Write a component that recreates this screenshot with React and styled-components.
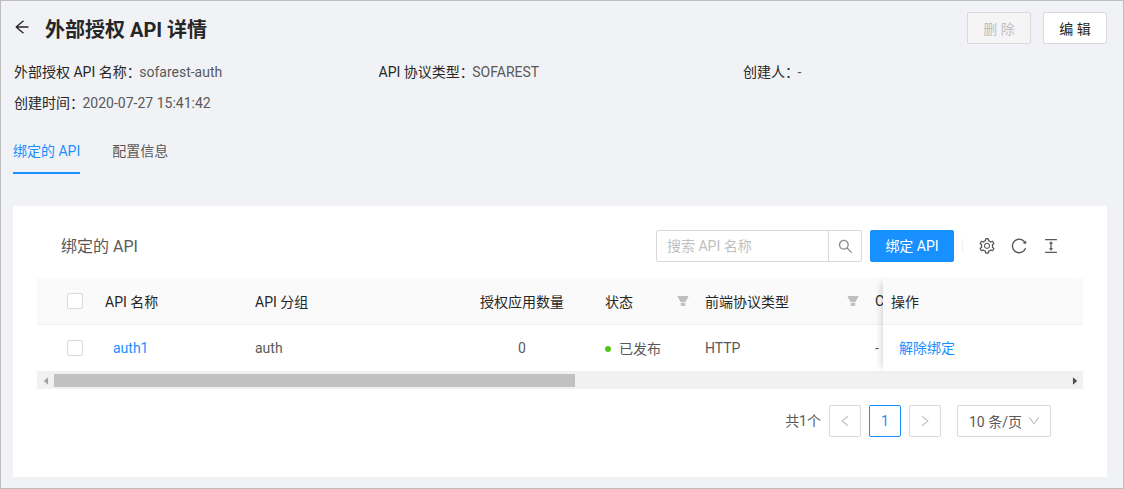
import React from "react";
import styled, { createGlobalStyle } from "styled-components";
import {
	AiOutlineArrowLeft,
	AiOutlineSetting,
	AiOutlineReload,
	AiOutlineColumnHeight,
	AiOutlineSearch,
	AiFillFilter,
	AiOutlineLeft,
	AiOutlineRight,
	AiOutlineDown,
	AiFillCaretLeft,
	AiFillCaretRight,
} from "react-icons/ai";

const GlobalStyle = createGlobalStyle`
	html, body {
		margin: 0;
		padding: 0;
		background: #f0f2f5;
	}
	* {
		box-sizing: border-box;
	}
	body {
		font-family: Roboto, "Noto Sans CJK SC", sans-serif;
		font-size: 14px;
		color: #595959;
	}
`;

const Page = styled.div`
	width: 1124px;
	height: 489px;
	overflow: hidden;
	background: #f0f2f5;
	border: 1px solid #bdbdbd;
	padding: 11px 16px 11px 12px;
`;

const Header = styled.header`
	display: flex;
	align-items: center;
	height: 32px;
`;

const Back = styled.span`
	display: flex;
	width: 32px;
	margin-bottom: 2px;
	font-size: 18px;
	color: #262626;
`;

const Title = styled.h1`
	margin: 0;
	flex: 1;
	font-size: 20px;
	font-weight: 700;
	color: #262626;
`;

const TopButton = styled.button`
	width: 64px;
	height: 32px;
	margin-left: 12px;
	padding: 0;
	font: inherit;
	border: 1px solid #d9d9d9;
	border-radius: 2px;
	color: ${(p) => (p.disabled ? "#bfbfbf" : "#262626")};
	background: ${(p) => (p.disabled ? "#f5f5f5" : "#fff")};
`;

const InfoGrid = styled.div`
	display: grid;
	grid-template-columns: repeat(3, 364.5px);
	grid-auto-rows: 31px;
	align-items: center;
	margin: 11px 0 0 1px;
`;

const InfoItem = styled.div`
	color: #595959;
`;

const InfoLabel = styled.span`
	margin-right: -1.5px;
	color: #262626;
`;

const Tabs = styled.nav`
	display: flex;
	gap: 32px;
	margin-top: 18px;
`;

const Tab = styled.div`
	height: 39px;
	padding-top: 5px;
	color: ${(p) => (p.$active ? "#1890ff" : "#595959")};
	border-bottom: 2px solid ${(p) => (p.$active ? "#1890ff" : "transparent")};
`;

const Card = styled.section`
	width: 1094px;
	height: 271px;
	margin-top: 32px;
	padding: 24px;
	background: #fff;
`;

const CardHead = styled.div`
	display: flex;
	align-items: center;
	height: 32px;
	padding: 0 16px 0 24px;
	margin-bottom: 16px;
`;

const CardTitle = styled.div`
	flex: 1;
	padding-bottom: 2px;
	font-size: 16px;
	color: #595959;
`;

const Search = styled.div`
	display: flex;
	width: 206px;
	height: 32px;
	border: 1px solid #d9d9d9;
	border-radius: 2px;
`;

const SearchInput = styled.div`
	flex: 1;
	padding-left: 10px;
	line-height: 30px;
	color: #bfbfbf;
`;

const SearchIcon = styled.div`
	display: flex;
	align-items: center;
	justify-content: center;
	width: 33px;
	border-left: 1px solid #d9d9d9;
	font-size: 17px;
	color: #8c8c8c;
`;

const Primary = styled.button`
	width: 84px;
	height: 32px;
	margin-left: 8px;
	padding: 0 0 2px;
	font: inherit;
	color: #fff;
	background: #1890ff;
	border: none;
	border-radius: 2px;
`;

const Divider = styled.span`
	width: 1px;
	height: 14px;
	margin: 0 8px;
	background: #f0f0f0;
`;

const Tool = styled.span`
	display: flex;
	width: 32px;
	justify-content: center;
	font-size: 18px;
	color: #595959;
`;

const Table = styled.div`
	position: relative;
	width: 1046px;
`;

const Row = styled.div`
	display: flex;
	align-items: center;
	height: 47px;
	overflow: hidden;
	background: ${(p) => (p.$head ? "#fafafa" : "#fff")};
	border-bottom: 1px solid #f0f0f0;
	color: ${(p) => (p.$head ? "#262626" : "#595959")};
`;

const Cell = styled.div`
	display: flex;
	flex: none;
	align-items: center;
	justify-content: ${(p) => (p.$center ? "center" : "space-between")};
	width: ${(p) => p.$w}px;
	padding-left: ${(p) => p.$pl || 0}px;
	white-space: nowrap;
`;

const Check = styled.span`
	display: block;
	width: 16px;
	height: 16px;
	margin-left: 30px;
	background: #fff;
	border: 1px solid #d9d9d9;
	border-radius: 2px;
`;

const FilterIcon = styled(AiFillFilter)`
	font-size: 14px;
	margin-right: -1px;
	color: #bfbfbf;
`;

const Link = styled.a`
	color: #1890ff;
`;

const Dot = styled.i`
	display: inline-block;
	width: 6px;
	height: 6px;
	margin-right: 8px;
	vertical-align: 2px;
	border-radius: 50%;
	background: #52c41a;
`;

const FixedColumn = styled.div`
	position: absolute;
	top: 0;
	right: 0;
	width: 200px;
	height: 94px;
	box-shadow: -6px 0 6px -4px rgba(0, 0, 0, 0.15);
`;

const FixedCell = styled.div`
	display: flex;
	align-items: center;
	height: 47px;
	padding-left: ${(p) => (p.$head ? "8px" : "16px")};
	padding-bottom: ${(p) => (p.$head ? "0" : "2px")};
	background: ${(p) => (p.$head ? "#fafafa" : "#fff")};
	border-bottom: 1px solid #f0f0f0;
	color: ${(p) => (p.$head ? "#262626" : "#1890ff")};
`;

const Scrollbar = styled.div`
	display: flex;
	align-items: center;
	height: 17px;
	background: #f1f1f1;
`;

const ScrollArrow = styled.span`
	display: flex;
	justify-content: center;
	flex: none;
	width: 17px;
	font-size: 10px;
	color: ${(p) => (p.$on ? "#505050" : "#a3a3a3")};
`;

const ScrollTrack = styled.div`
	flex: 1;
	height: 13px;
`;

const ScrollThumb = styled.div`
	width: 521px;
	height: 13px;
	background: #c1c1c1;
`;

const Pager = styled.div`
	display: flex;
	align-items: center;
	justify-content: flex-end;
	margin-top: 16px;
	padding-right: 32px;
`;

const Total = styled.span`
	margin-right: 8px;
	padding-bottom: 2px;
`;

const PageItem = styled.span`
	display: flex;
	align-items: center;
	justify-content: center;
	width: 32px;
	height: 32px;
	margin-right: 8px;
	font-size: 14px;
	color: ${(p) => (p.$active ? "#1890ff" : "#bfbfbf")};
	border: 1px solid ${(p) => (p.$active ? "#1890ff" : "#d9d9d9")};
	border-radius: 2px;
`;

const SizeSelect = styled.div`
	display: flex;
	align-items: center;
	justify-content: space-between;
	width: 94px;
	height: 32px;
	margin-left: 8px;
	padding: 0 9px 0 11px;
	border: 1px solid #d9d9d9;
	border-radius: 2px;
	svg {
		font-size: 14px;
		color: #bfbfbf;
	}
`;

export default function App() {
	return (
		<Page>
			<GlobalStyle />
			<Header>
				<Back>
					<AiOutlineArrowLeft />
				</Back>
				<Title>外部授权 API 详情</Title>
				<TopButton disabled>删 除</TopButton>
				<TopButton>编 辑</TopButton>
			</Header>

			<InfoGrid>
				<InfoItem>
					<InfoLabel>外部授权 API 名称：</InfoLabel>sofarest-auth
				</InfoItem>
				<InfoItem>
					<InfoLabel>API 协议类型：</InfoLabel>SOFAREST
				</InfoItem>
				<InfoItem>
					<InfoLabel>创建人：</InfoLabel>-
				</InfoItem>
				<InfoItem>
					<InfoLabel>创建时间：</InfoLabel>2020-07-27 15:41:42
				</InfoItem>
			</InfoGrid>

			<Tabs>
				<Tab $active>绑定的 API</Tab>
				<Tab>配置信息</Tab>
			</Tabs>

			<Card>
				<CardHead>
					<CardTitle>绑定的 API</CardTitle>
					<Search>
						<SearchInput>搜索 API 名称</SearchInput>
						<SearchIcon>
							<AiOutlineSearch />
						</SearchIcon>
					</Search>
					<Primary>绑定 API</Primary>
					<Divider />
					<Tool>
						<AiOutlineSetting />
					</Tool>
					<Tool>
						<AiOutlineReload />
					</Tool>
					<Tool>
						<AiOutlineColumnHeight />
					</Tool>
				</CardHead>

				<Table>
					<Row $head>
						<Cell $w={68}>
							<Check />
						</Cell>
						<Cell $w={150}>API 名称</Cell>
						<Cell $w={200}>API 分组</Cell>
						<Cell $w={134} $center>
							授权应用数量
						</Cell>
						<Cell $w={100} $pl={16}>
							状态
							<FilterIcon />
						</Cell>
						<Cell $w={170} $pl={16}>
							前端协议类型
							<FilterIcon />
						</Cell>
						<Cell $w={100} $pl={16}>
							CORS
						</Cell>
					</Row>
					<Row>
						<Cell $w={68}>
							<Check />
						</Cell>
						<Cell $w={150} $pl={8}>
							<Link>auth1</Link>
						</Cell>
						<Cell $w={200}>auth</Cell>
						<Cell $w={134} $center>
							0
						</Cell>
						<Cell $w={100} $pl={16}>
							<span>
								<Dot />
								已发布
							</span>
						</Cell>
						<Cell $w={170} $pl={16}>
							HTTP
						</Cell>
						<Cell $w={100} $pl={16}>
							-
						</Cell>
					</Row>
					<FixedColumn>
						<FixedCell $head>操作</FixedCell>
						<FixedCell>解除绑定</FixedCell>
					</FixedColumn>
					<Scrollbar>
						<ScrollArrow>
							<AiFillCaretLeft />
						</ScrollArrow>
						<ScrollTrack>
							<ScrollThumb />
						</ScrollTrack>
						<ScrollArrow $on>
							<AiFillCaretRight />
						</ScrollArrow>
					</Scrollbar>
				</Table>

				<Pager>
					<Total>共1个</Total>
					<PageItem>
						<AiOutlineLeft />
					</PageItem>
					<PageItem $active>1</PageItem>
					<PageItem>
						<AiOutlineRight />
					</PageItem>
					<SizeSelect>
						10 条/页
						<AiOutlineDown />
					</SizeSelect>
				</Pager>
			</Card>
		</Page>
	);
}
